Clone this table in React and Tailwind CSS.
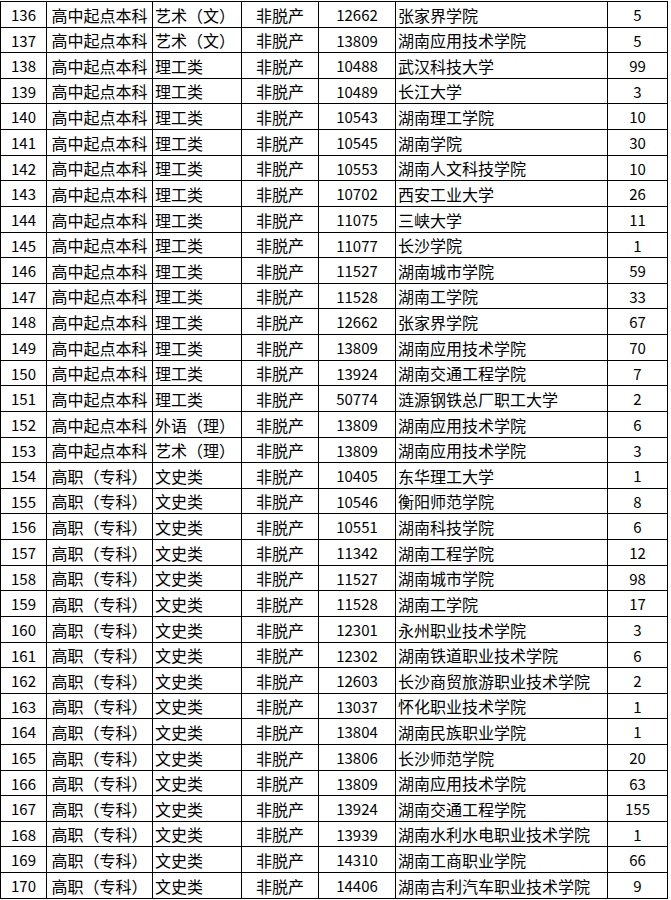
import React from 'react';

const rows = [
    [136, '高中起点本科', '艺术（文）', '非脱产', '12662', '张家界学院', 5],
    [137, '高中起点本科', '艺术（文）', '非脱产', '13809', '湖南应用技术学院', 5],
    [138, '高中起点本科', '理工类', '非脱产', '10488', '武汉科技大学', 99],
    [139, '高中起点本科', '理工类', '非脱产', '10489', '长江大学', 3],
    [140, '高中起点本科', '理工类', '非脱产', '10543', '湖南理工学院', 10],
    [141, '高中起点本科', '理工类', '非脱产', '10545', '湖南学院', 30],
    [142, '高中起点本科', '理工类', '非脱产', '10553', '湖南人文科技学院', 10],
    [143, '高中起点本科', '理工类', '非脱产', '10702', '西安工业大学', 26],
    [144, '高中起点本科', '理工类', '非脱产', '11075', '三峡大学', 11],
    [145, '高中起点本科', '理工类', '非脱产', '11077', '长沙学院', 1],
    [146, '高中起点本科', '理工类', '非脱产', '11527', '湖南城市学院', 59],
    [147, '高中起点本科', '理工类', '非脱产', '11528', '湖南工学院', 33],
    [148, '高中起点本科', '理工类', '非脱产', '12662', '张家界学院', 67],
    [149, '高中起点本科', '理工类', '非脱产', '13809', '湖南应用技术学院', 70],
    [150, '高中起点本科', '理工类', '非脱产', '13924', '湖南交通工程学院', 7],
    [151, '高中起点本科', '理工类', '非脱产', '50774', '涟源钢铁总厂职工大学', 2],
    [152, '高中起点本科', '外语（理）', '非脱产', '13809', '湖南应用技术学院', 6],
    [153, '高中起点本科', '艺术（理）', '非脱产', '13809', '湖南应用技术学院', 3],
    [154, '高职（专科）', '文史类', '非脱产', '10405', '东华理工大学', 1],
    [155, '高职（专科）', '文史类', '非脱产', '10546', '衡阳师范学院', 8],
    [156, '高职（专科）', '文史类', '非脱产', '10551', '湖南科技学院', 6],
    [157, '高职（专科）', '文史类', '非脱产', '11342', '湖南工程学院', 12],
    [158, '高职（专科）', '文史类', '非脱产', '11527', '湖南城市学院', 98],
    [159, '高职（专科）', '文史类', '非脱产', '11528', '湖南工学院', 17],
    [160, '高职（专科）', '文史类', '非脱产', '12301', '永州职业技术学院', 3],
    [161, '高职（专科）', '文史类', '非脱产', '12302', '湖南铁道职业技术学院', 6],
    [162, '高职（专科）', '文史类', '非脱产', '12603', '长沙商贸旅游职业技术学院', 2],
    [163, '高职（专科）', '文史类', '非脱产', '13037', '怀化职业技术学院', 1],
    [164, '高职（专科）', '文史类', '非脱产', '13804', '湖南民族职业学院', 1],
    [165, '高职（专科）', '文史类', '非脱产', '13806', '长沙师范学院', 20],
    [166, '高职（专科）', '文史类', '非脱产', '13809', '湖南应用技术学院', 63],
    [167, '高职（专科）', '文史类', '非脱产', '13924', '湖南交通工程学院', 155],
    [168, '高职（专科）', '文史类', '非脱产', '13939', '湖南水利水电职业技术学院', 1],
    [169, '高职（专科）', '文史类', '非脱产', '14310', '湖南工商职业学院', 66],
    [170, '高职（专科）', '文史类', '非脱产', '14406', '湖南吉利汽车职业技术学院', 9],
];

// spreadsheet rows are ~25.6px, so alternate 25/26 to keep grid lines crisp
const ROW = 25.62;
const rowHeight = (i) => Math.round((i + 1) * ROW) - Math.round(i * ROW);

const cell = 'flex items-center border-r border-b border-black whitespace-nowrap overflow-hidden';
const num = 'text-[15px]';
const cjk = 'text-[16px]';

const App = () => {
    return (
        <div className="w-[671px] h-[900px] bg-white pt-px text-black font-['Noto_Sans_CJK_SC','Noto_Sans',sans-serif] leading-none">
            <div className="w-[668px] border-l border-t border-black">
                {rows.map((r, i) => (
                    <div
                        key={r[0]}
                        className={`grid grid-cols-[46px_106px_89px_77px_77px_212px_60px] ${rowHeight(i) === 26 ? 'h-[26px]' : 'h-[25px]'}`}
                    >
                        <div className={`${cell} ${num} justify-center`}>{r[0]}</div>
                        <div className={`${cell} ${cjk} justify-center`}>{r[1]}</div>
                        <div className={`${cell} ${cjk} pl-[2px]`}>{r[2]}</div>
                        <div className={`${cell} ${cjk} justify-center`}>{r[3]}</div>
                        <div className={`${cell} ${num} justify-center`}>{r[4]}</div>
                        <div className={`${cell} ${cjk} pl-[2px]`}>{r[5]}</div>
                        <div className={`${cell} ${num} justify-center`}>{r[6]}</div>
                    </div>
                ))}
            </div>
        </div>
    );
};

export default App;
